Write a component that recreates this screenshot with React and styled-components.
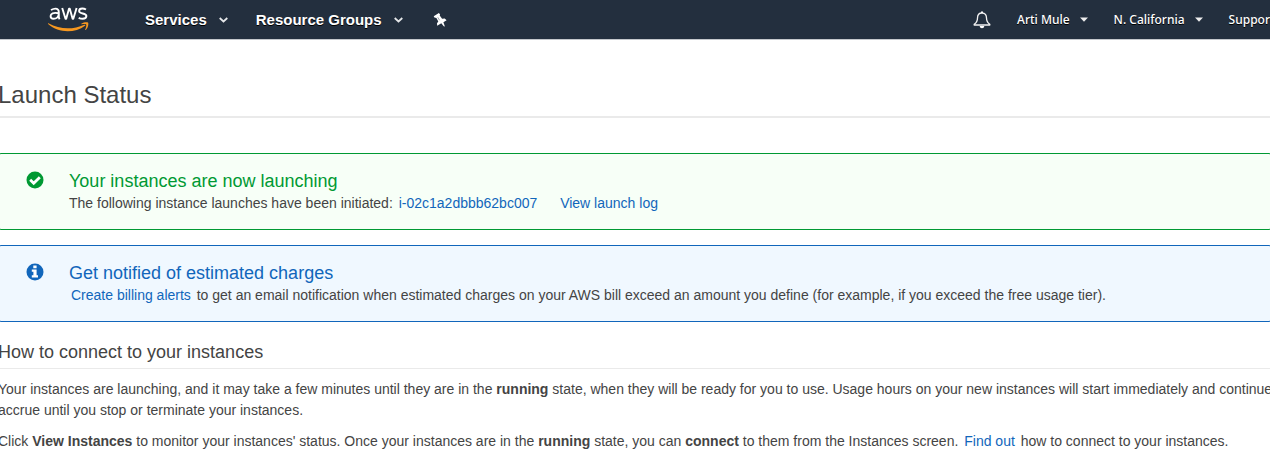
import React from "react";
import styled, { createGlobalStyle } from "styled-components";

const GlobalStyle = createGlobalStyle`
  * { box-sizing: border-box; }
  body {
    margin: 0;
    background: #fff;
    color: #444;
    font: 14px/21px "Liberation Sans", Arial, sans-serif;
    overflow-x: hidden;
  }
`;

const Header = styled.header`
  display: flex;
  align-items: center;
  height: 40px;
  padding-left: 48px;
  background: #232f3e;
  border-bottom: 1px solid #c4c7cc;
`;

const Logo = styled.a`
  display: flex;
  margin-right: 56px;
`;

const NavGroup = styled.nav`
  display: flex;
  flex: none;
  align-items: center;
  gap: ${(p) => p.$gap};
`;

const Spacer = styled.div`
  flex: 1;
`;

const NavButton = styled.button`
  display: flex;
  align-items: center;
  flex: none;
  gap: ${(p) => (p.$small ? "10px" : "12px")};
  padding: 0;
  border: 0;
  background: none;
  color: #fff;
  font: ${(p) =>
    p.$small
      ? '500 12px/20px "Noto Sans", sans-serif'
      : 'bold 15px/22px "Liberation Sans", Arial, sans-serif'};
  text-shadow: 0 1px 0 #000;
  white-space: nowrap;
  cursor: pointer;
`;

const Main = styled.main`
  margin: 0 -2px;
`;

const Title = styled.h1`
  margin: 0;
  padding: 40px 0 6px;
  border-bottom: 2px solid #eaeaea;
  font-size: 24px;
  line-height: 30px;
  font-weight: normal;
`;

const Alerts = styled.div`
  display: grid;
  gap: 15px;
  margin-top: 35px;
`;

const tones = {
  success: { line: "#093", fill: "#f7fff7", text: "#093" },
  info: { line: "#1166bb", fill: "#f0f8ff", text: "#1166bb" },
};

const Alert = styled.section`
  display: flex;
  align-items: flex-start;
  gap: 25px;
  padding: 15px 27px;
  border: 1px solid ${(p) => tones[p.$tone].line};
  border-radius: 3px;
  background: ${(p) => tones[p.$tone].fill};
  color: ${(p) => tones[p.$tone].text};

  > svg {
    flex: none;
    margin-top: 2px;
  }
`;

const AlertTitle = styled.h2`
  margin: 0;
  font-size: 18px;
  line-height: 24px;
  font-weight: normal;
`;

const AlertText = styled.p`
  margin: 0;
  color: #444;
`;

const Link = styled.a`
  color: #1166bb;
  text-decoration: none;
  padding: 0 2px;
  margin-left: ${(p) => (p.$apart ? "15px" : "0")};
`;

const SectionTitle = styled.h2`
  margin: 0 0 10px;
  padding: 20px 0 6px;
  border-bottom: 1px solid #eaeaea;
  font-size: 18px;
  line-height: 20px;
  font-weight: normal;
`;

const Paragraph = styled.p`
  margin: 0 0 10px;
  white-space: nowrap;
`;

const AwsLogo = () => (
  <svg width="41" height="28" viewBox="0 0 41 28" fill="none" aria-label="aws">
    <g stroke="#fff" strokeWidth="1.900" strokeLinejoin="round">
      <path d="M3 4C4.500 3.100 6 2.600 7.400 2.600c2.400 0 3.400 1.200 3.400 3.600v4.200c0 1.200.3 2 .8 2.800M10.600 7.200C5.300 6.300 2.600 7.400 2.600 10c0 1.700 1.100 2.800 2.900 2.800 2.900 0 5.100-1.700 5.100-4.300" />
      <path d="M14.200 2l3.300 10.800h.7L21 2.700h.8l2.800 10.100h.7L28.600 2" />
      <path d="M38 3.500c-1.200-.7-2.500-1-3.700-1-2 0-3.200 1-3.200 2.500 0 3.400 7.300 1.700 7.300 5.100 0 1.700-1.400 2.700-3.700 2.700-1.500 0-2.900-.4-4-1" />
    </g>
    <path d="M.4 17.200c11.600 6.500 24.400 6.600 36 1.500.8-.3 1.300.5.6 1-10.200 7.600-26.200 7.700-36.900-1.600-.5-.5-.3-1.100.3-.9z" fill="#f79820" />
    <path d="M33.600 17.500c2-1.500 5.500-1.600 6.400-1 .8.800.2 5.400-2.200 7.400-.5.300-.8.100-.6-.4.700-1.700 1.500-4.500 1-5.100-.5-.6-2.900-.4-4.400-.2-.6 0-.7-.4-.2-.7z" fill="#f79820" />
  </svg>
);

const Chevron = () => (
  <svg width="9" height="6" viewBox="0 0 9 6" fill="none" aria-hidden="true">
    <path d="M.7 1l3.800 3.500L8.300 1" stroke="#e6e8ea" strokeWidth="1.700" />
  </svg>
);

const Caret = () => (
  <svg width="8" height="5" viewBox="0 0 8 5" aria-hidden="true">
    <path d="M0 .500h8L4 4.700z" fill="#eee" />
  </svg>
);

const Pin = () => (
  <svg width="16" height="14" viewBox="-2 0 16 14" aria-hidden="true">
    <path d="M.700 3.200L5.900 0l1.200 1.400-.4 1.200 2.400 3.200 2.600-.2 1.900 1.600-3.200 2.100 1.500 4.200-1.200-.2-2.400-3L4.200 12.800 4 10.300l1.300-1.900-1.900-3.500-2-.3z" fill="#fff" />
    <path d="M4.700 4.200l1.900 3.100" stroke="#a3a9b0" strokeWidth="1" />
  </svg>
);

const Bell = () => (
  <svg width="18" height="18" viewBox="0 0 18 18" fill="none" aria-hidden="true">
    <path d="M9 2C5.800 2 4.500 4.300 4.500 7c0 4-1.300 5-3.300 6.300v.7h15.600v-.7c-2-1.300-3.300-2.300-3.300-6.300 0-2.700-1.300-5-4.500-5z" stroke="#f2f2f2" strokeWidth="1.300" strokeLinejoin="round" />
    <path d="M8 .5h2V2H8zM6.700 15h4.600c-.2 1.500-1 2.200-2.300 2.200S6.900 16.500 6.700 15z" fill="#fff" />
  </svg>
);

const CheckIcon = () => (
  <svg width="18" height="18" viewBox="0 0 18 18" aria-hidden="true">
    <circle cx="9" cy="9" r="8.500" fill="#093" />
    <path d="M4.200 8.800l3.500 3.400 6.100-6" fill="none" stroke="#fff" strokeWidth="2.800" />
  </svg>
);

const InfoIcon = () => (
  <svg width="18" height="18" viewBox="0 0 18 18" aria-hidden="true">
    <circle cx="9" cy="9" r="8.500" fill="#1166bb" />
    <path d="M7.300 2.600h3.300v2.600H7.300zM5.800 6.500h4.800v5.700H12v2.200H5.800v-2.200h1.600V8.700H5.800z" fill="#fff" />
  </svg>
);

export default function App() {
  return (
    <>
      <GlobalStyle />
      <Header>
        <Logo href="#home"><AwsLogo /></Logo>
        <NavGroup $gap="28px">
          <NavButton>Services <Chevron /></NavButton>
          <NavButton>Resource Groups <Chevron /></NavButton>
          <NavButton aria-label="Pin shortcuts"><Pin /></NavButton>
        </NavGroup>
        <Spacer />
        <NavGroup $gap="26px">
          <NavButton aria-label="Notifications"><Bell /></NavButton>
          <NavButton $small>Arti Mule <Caret /></NavButton>
          <NavButton $small>N. California <Caret /></NavButton>
          <NavButton $small>Suppor</NavButton>
        </NavGroup>
      </Header>
      <Main>
        <Title>Launch Status</Title>
        <Alerts>
          <Alert $tone="success">
            <CheckIcon />
            <div>
              <AlertTitle>Your instances are now launching</AlertTitle>
              <AlertText>
                The following instance launches have been initiated:{" "}
                <Link href="#instance">i-02c1a2dbbb62bc007</Link>{" "}
                <Link $apart href="#log">View launch log</Link>
              </AlertText>
            </div>
          </Alert>
          <Alert $tone="info">
            <InfoIcon />
            <div>
              <AlertTitle>Get notified of estimated charges</AlertTitle>
              <AlertText>
                <Link href="#billing">Create billing alerts</Link> to get an email
                notification when estimated charges on your AWS bill exceed an amount
                you define (for example, if you exceed the free usage tier).
              </AlertText>
            </div>
          </Alert>
        </Alerts>
        <SectionTitle>How to connect to your instances</SectionTitle>
        <Paragraph>
          Your instances are launching, and it may take a few minutes until they are in
          the <b>running</b> state, when they will be ready for you to use. Usage hours
          on your new instances will start immediately and continue
          <br />
          accrue until you stop or terminate your instances.
        </Paragraph>
        <Paragraph>
          Click <b>View Instances</b> to monitor your instances' status. Once your
          instances are in the <b>running</b> state, you can <b>connect</b> to them from
          the Instances screen. <Link href="#find-out">Find out</Link> how to connect to
          your instances.
        </Paragraph>
      </Main>
    </>
  );
}
